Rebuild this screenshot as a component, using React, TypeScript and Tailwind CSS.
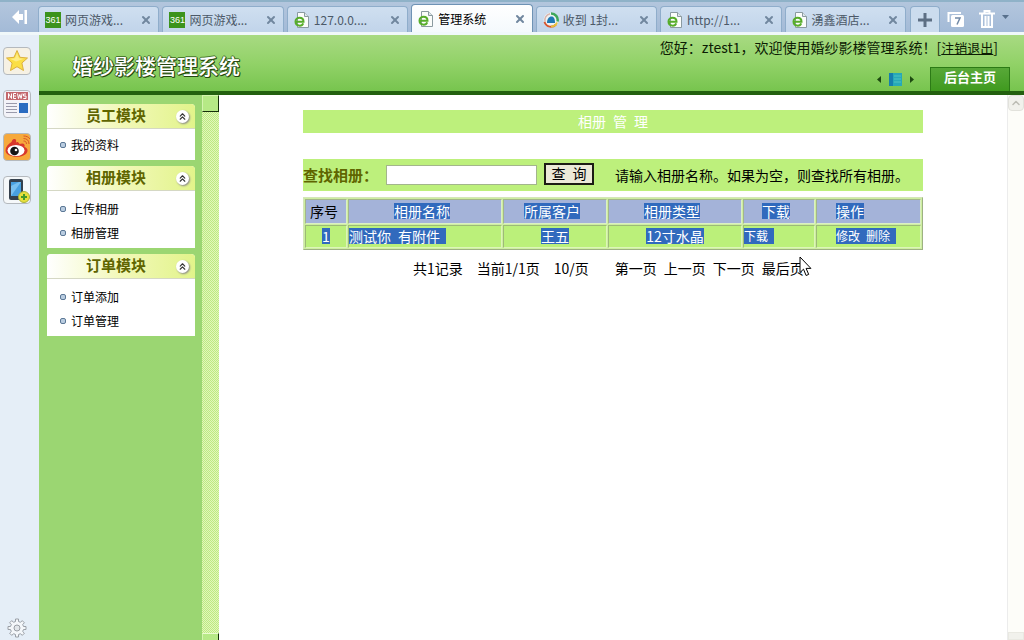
import React, { useState } from 'react';
import { ChevronUp, ChevronsUp, X } from 'lucide-react';

type TabIcon = '361' | 'page' | 'ball';

interface BrowserTab {
  title: string;
  icon: TabIcon;
}

const TABS: BrowserTab[] = [
  { title: '网页游戏...', icon: '361' },
  { title: '网页游戏...', icon: '361' },
  { title: '127.0.0....', icon: 'page' },
  { title: '管理系统', icon: 'page' },
  { title: '收到 1封...', icon: 'ball' },
  { title: 'http://1...', icon: 'page' },
  { title: '湧鑫酒店...', icon: 'page' },
];

const MENU = [
  { title: '员工模块', items: ['我的资料'], pad: 'pt-1' },
  { title: '相册模块', items: ['上传相册', '相册管理'], pad: 'pt-1.5' },
  { title: '订单模块', items: ['订单添加', '订单管理'], pad: 'pt-1.5' },
];

const PAGER_LINKS = ['第一页', '上一页', '下一页', '最后页'];

const PageIcon: React.FC = () => (
  <svg width="16" height="16" viewBox="0 0 16 16" className="shrink-0">
    <path d="M3.5 .5h7l4 4v11h-11z" fill="#fbfdfb" stroke="#8a9aa0" />
    <path d="M10.5 .5v4h4" fill="#dfe7ea" stroke="#8a9aa0" />
    <path d="M2 9.800h7.500C9.500 4.300 1.500 4.500 1.500 9.600c0 5 6.500 5 7.700 1.800" fill="none" stroke="#57ad2a" strokeWidth="2" />
  </svg>
);

const BallIcon: React.FC = () => (
  <svg width="16" height="16" viewBox="0 0 16 16" className="shrink-0">
    <circle cx="8" cy="8" r="7.500" fill="#eef2f4" />
    <path d="M2 10A6.500 6.500 0 0 1 7 1.800" fill="none" stroke="#d9b4ac" strokeWidth="1.500" />
    <path d="M8 1.500a6.500 6.500 0 0 1 6.500 8" fill="none" stroke="#3fa75a" strokeWidth="2.500" />
    <path d="M1.500 10c2 5.500 8 6 11.500 2.500" fill="none" stroke="#d8552e" strokeWidth="2" />
    <path d="M8 14.500c3 0 5-1.500 6-4" fill="none" stroke="#e8c43a" strokeWidth="2" />
    <path d="M4 11c0-4 2-6.500 4.500-6.500S12 7 12 11z" fill="#1e78b4" />
  </svg>
);

const Logo361: React.FC = () => (
  <span className="flex h-4 w-4 shrink-0 items-center justify-center bg-[#3c931c] font-['Liberation_Sans',sans-serif] text-[9px] text-white">361</span>
);

const StarIcon: React.FC = () => (
  <svg width="24" height="24" viewBox="0 0 24 24">
    <path d="M12 1.500l3 6.800 7.500.7-5.600 5 1.600 7.500L12 17.700 5.500 21.500l1.600-7.500-5.600-5 7.500-.7z" fill="#fbdf45" stroke="#dcb040" strokeLinejoin="round" />
    <path d="M12 4l2 5.200 5 .6-8 2.700-6-2.700 5-.6z" fill="#fdec86" />
  </svg>
);

const NewsIcon: React.FC = () => (
  <svg width="26" height="26" viewBox="0 0 26 26">
    <rect x="2" y="1" width="22" height="8" fill="#c4686c" />
    <path d="M4.500 7.500v-5l3 5v-5M12 2.500H9.500v5H12M9.500 5H12M13.500 2.500l1 5 1.300-4 1.300 4 1-5M22 3h-2.500v2H22v2.500h-2.700" fill="none" stroke="#fff" />
    <path d="M2 12.500h11M2 15.500h11M2 18.500h11M2 21.500h11" stroke="#9a9aab" />
    <rect x="15" y="12" width="9" height="10" fill="#2b6bc0" />
  </svg>
);

const WeiboIcon: React.FC = () => (
  <svg width="26" height="26" viewBox="0 0 26 26">
    <path d="M11 5C9 4.500 8 6 7.500 8 4 10 1.500 13 1.500 16.500c0 8 21 8.500 22 .5.300-2-1-3.500-3-4 .8-3-1-4.500-5-3C14 7.500 13 8 12 8.500 12.500 6.500 12 5.300 11 5z" fill="#d8382c" />
    <ellipse cx="12" cy="16.500" rx="8.500" ry="5.500" fill="#fff" />
    <circle cx="10.500" cy="17" r="4.300" fill="#151515" />
    <circle cx="12" cy="16" r="1.300" fill="#fff" />
    <path d="M19.500 7c2 0 3 1 3 3M19.500 4.500c3.500 0 5.500 2 5.500 5.500M19.500 2c3 0 5 1 6.500 3" fill="none" stroke="#d8562c" />
  </svg>
);

const PhoneIcon: React.FC = () => (
  <svg width="26" height="26" viewBox="0 0 26 26">
    <rect x="5" y="2" width="14" height="21" rx="2" fill="#35414e" />
    <rect x="7" y="5" width="10" height="14" fill="#48a0e0" />
    <path d="M7 19V9l8-4h2z" fill="#79c0f0" />
    <circle cx="20" cy="20" r="5.500" fill="#e8e03c" stroke="#a8b03a" />
    <path d="M20 17v6M17 20h6" stroke="#469a2a" strokeWidth="2" />
  </svg>
);

const GearIcon: React.FC = () => (
  <svg width="20" height="20" viewBox="0 0 20 20" fill="#f4f7fa" stroke="#9a9fa6" strokeLinejoin="round">
    <path d="M8.500 1h3v2.500l2 .8 1.700-1.700 2.200 2.200-1.700 1.700.8 2H19v3h-2.500l-.8 2 1.700 1.700-2.200 2.200-1.700-1.700-2 .8V19h-3v-2.500l-2-.8-1.700 1.700-2.200-2.200 1.700-1.700-.8-2H1v-3h2.500l.8-2-1.700-1.700 2.200-2.200 1.700 1.700 2-.8z" />
    <circle cx="10" cy="10" r="3" fill="#e2e6ea" />
  </svg>
);

const MouseCursor: React.FC = () => (
  <svg width="13" height="21" viewBox="0 0 13 21" className="absolute -top-0.5 -right-2">
    <path d="M1 1v15.500l3.500-3.300 2.600 6.300 2.600-1.100-2.600-6h4.800z" fill="#fff" stroke="#000" />
  </svg>
);

const Tab: React.FC<{ tab: BrowserTab; active: boolean; onClick: () => void }> = ({ tab, active, onClick }) => (
  <div
    className={`flex min-w-0 flex-1 items-center rounded-t border border-b-0 px-1.5 ${
      active ? 'h-7 border-[#6f93b5] bg-gradient-to-b from-white to-[#f4f9fc]' : 'h-[26px] border-[#8fadcb] bg-gradient-to-b from-[#cfdff0] to-[#c1d4ea]'
    }`}
  >
    <button onClick={onClick} className={`flex min-w-0 flex-1 items-center gap-1 text-xs whitespace-nowrap ${active ? 'text-black' : 'text-[#4c5968]'}`}>
      {tab.icon === '361' && <Logo361 />}
      {tab.icon === 'page' && <PageIcon />}
      {tab.icon === 'ball' && <BallIcon />}
      {tab.title}
    </button>
    <button aria-label="close" className="text-[#71879f]">
      <X size={12} strokeWidth={4} />
    </button>
  </div>
);

const TabBar: React.FC = () => {
  const [active, setActive] = useState(3);
  return (
    <div className="flex h-8 shrink-0 border-t-2 border-[#8fb2c8] bg-gradient-to-b from-[#b3c6dd] to-[#a3bad7]">
      <button aria-label="collapse" className="flex w-[38px] shrink-0 items-center justify-center">
        <svg width="15" height="14" viewBox="0 0 15 14" fill="#fff">
          <path d="M0 7l7-7v4h4v6H7v4zM12.500 0H15v14h-2.500z" />
        </svg>
      </button>
      <div className="flex min-w-0 flex-1 items-end gap-[3px]">
        {TABS.map((tab, i) => (
          <Tab key={i} tab={tab} active={i === active} onClick={() => setActive(i)} />
        ))}
      </div>
      <div className="flex w-[118px] shrink-0 items-end pl-1">
        <button aria-label="new tab" className="flex h-[26px] w-[30px] items-center justify-center rounded-t border border-b-0 border-[#8fadcb] bg-[#cbdcee]">
          <svg width="14" height="14" viewBox="0 0 14 14">
            <path d="M7 0v14M0 7h14" stroke="#5d6f84" strokeWidth="3" />
          </svg>
        </button>
        <button aria-label="tabs" className="flex h-[26px] w-8 items-center justify-center">
          <svg width="18" height="17" viewBox="0 0 18 17">
            <path d="M1.500 11V2H14" fill="none" stroke="#fff" strokeWidth="2" />
            <rect x="4" y="4" width="13" height="12" rx="1.500" fill="#fff" />
            <path d="M8 7h5l-3 6.500" fill="none" stroke="#7189a6" strokeWidth="1.500" />
          </svg>
        </button>
        <button aria-label="trash" className="flex h-[26px] w-[30px] items-center justify-center">
          <svg width="16" height="18" viewBox="0 0 16 18" fill="none" stroke="#fff" strokeWidth="2">
            <path d="M0 3.500h16M5.500 3V1h5v2M3 4v13h10V4M6.500 6v10M9.500 6v10" />
          </svg>
        </button>
        <span className="flex h-[26px] flex-1 items-center pb-1">
          <svg width="7" height="4" viewBox="0 0 7 4">
            <path d="M0 0h7L3.500 4z" fill="#58708c" />
          </svg>
        </span>
      </div>
    </div>
  );
};

const Rail: React.FC = () => {
  const box = 'flex h-7 w-7 items-center justify-center rounded border border-[#b4b9be] overflow-hidden';
  return (
    <aside className="flex w-[39px] shrink-0 flex-col items-center bg-[#e5eef7] pt-3 pr-[5px] pb-0.5">
      <div className="flex flex-col gap-[15px]">
        <button aria-label="favorites" className={`${box} bg-[#f6f1e4]`}><StarIcon /></button>
        <button aria-label="news" className={`${box} bg-[#f3f3f8]`}><NewsIcon /></button>
        <button aria-label="weibo" className={`${box} bg-[#f6a93c]`}><WeiboIcon /></button>
        <button aria-label="phone" className={`${box} bg-[#f5f8fa]`}><PhoneIcon /></button>
      </div>
      <button aria-label="settings" className="mt-auto"><GearIcon /></button>
    </aside>
  );
};

const Header: React.FC = () => (
  <header className="flex h-[60px] shrink-0 justify-between border-b-4 border-[#23600f] bg-gradient-to-b from-[#a8da82] via-[#92d268] to-[#77c44e]">
    <h1 className="pt-4 pl-[33px] text-[21px] leading-7 font-medium text-white [text-shadow:1px_1px_0_#24470f,-1px_0_0_#4a7a2c,0_-1px_0_#4a7a2c,1px_0_0_#24470f,0_1px_0_#24470f]">
      婚纱影楼管理系统
    </h1>
    <div className="flex flex-col items-end justify-between">
      <p className="pr-[26px] text-sm leading-6 text-[#0c1c04]">
        您好：ztest1，欢迎使用婚纱影楼管理系统！[<a href="#" className="text-[13px] underline">注销退出</a>]
      </p>
      <div className="flex items-end gap-4 pr-[14px]">
        <div className="flex h-6 items-center gap-[7px]">
          <svg width="5" height="7" viewBox="0 0 5 7"><path d="M4 0v7L0 3.500z" fill="#1d4a10" /></svg>
          <svg width="13" height="13" viewBox="0 0 13 13">
            <rect width="13" height="13" fill="#26a9b8" />
            <rect width="4" height="13" fill="#157fae" />
            <path d="M5 3h7M5 6h7M5 9h7" stroke="#4fc3c0" />
          </svg>
          <svg width="5" height="7" viewBox="0 0 5 7"><path d="M1 0v7l4-3.500z" fill="#1d4a10" /></svg>
        </div>
        <button className="h-6 w-20 border border-b-0 border-[#2c7a16] bg-gradient-to-b from-[#58a838] to-[#3f9a1e] pb-1.5 text-[13px] leading-4 font-bold text-white">
          后台主页
        </button>
      </div>
    </div>
  </header>
);

const SideMenu: React.FC = () => (
  <nav className="flex w-[163px] shrink-0 flex-col gap-1.5 bg-[#9bd672] pt-[9px] pr-[7px] pl-2">
    {MENU.map((group) => (
      <section key={group.title} className="rounded-t bg-white">
        <div className="flex h-[25px] rounded-t border-b border-[#d5d8c4] bg-gradient-to-r from-white via-[#f2f8b8] to-[#e2f48a] pr-1.5">
          <h2 className="flex-1 pl-[39px] text-[15px] leading-[22px] font-bold text-[#5f6500]">{group.title}</h2>
          <button aria-label={group.title} className="flex h-[13px] w-[13px] items-center justify-center self-center rounded-full bg-white text-[#333] shadow-[1px_1px_2px_#888]">
            <ChevronsUp size={11} strokeWidth={2.500} />
          </button>
        </div>
        <ul className={`pb-[3px] ${group.pad}`}>
          {group.items.map((item) => (
            <li key={item} className="flex h-6 items-center gap-[5px] pl-[13px] text-xs">
              <span className="h-1.5 w-1.5 rounded-[2px] border border-[#5c7896] bg-[#b9cce0]"></span>
              <a href="#" className="text-black">{item}</a>
            </li>
          ))}
        </ul>
      </section>
    ))}
  </nav>
);

const Splitter: React.FC = () => (
  <div className="flex w-[17px] shrink-0 flex-col justify-between bg-[#d6f3a4] bg-[repeating-conic-gradient(#bdec80_0_25%,#e2f5bd_0_50%)] bg-[length:2px_2px]">
    <div className="h-[17px] border border-t-[#d4f5ae] border-r-[#16300a] border-b-[#16300a] border-l-[#d4f5ae] bg-[#b6e986]"></div>
    <div className="h-[7px] border border-b-0 border-t-[#eafbd0] border-r-[#16300a] border-l-[#d4f5ae] bg-[#b6e986]"></div>
  </div>
);

// text inside an active selection
const Sel: React.FC<{ children: React.ReactNode; className?: string }> = ({ children, className = '' }) => (
  <span className={`inline-block h-4 bg-[#316abd] align-top leading-4 whitespace-pre text-white ${className}`}>{children}</span>
);

const AlbumTable: React.FC = () => {
  const th = 'h-[25px] border border-t-[#a3b58c] border-l-[#a3b58c] border-r-[#dcefc4] border-b-[#dcefc4] bg-[#a4b3d9] pt-0 pb-0.5 font-normal leading-4';
  const td = 'h-[23px] border border-t-[#9dba78] border-l-[#9dba78] border-r-[#dcf5b8] border-b-[#dcf5b8] bg-[#bbf07a] pt-0 pb-0.5 leading-4';
  return (
    <table className="mt-1.5 w-full table-fixed border-separate border-spacing-px border border-t-[#d3e6b8] border-r-[#9db183] border-b-[#9db183] border-l-[#d3e6b8] bg-[#cdeea0] text-sm">
      <colgroup>
        <col className="w-[42px]" />
        <col className="w-[154px]" />
        <col className="w-[104px]" />
        <col className="w-[134px]" />
        <col className="w-[72px]" />
        <col />
      </colgroup>
      <thead>
        <tr>
          <th className={`${th} pr-1 pl-0`}>序号</th>
          <th className={`${th} pr-1.5 pl-0`}><Sel>相册名称</Sel></th>
          <th className={`${th} pr-1.5 pl-0`}><Sel>所属客户</Sel></th>
          <th className={`${th} pr-1.5 pl-0`}><Sel>相册类型</Sel></th>
          <th className={`${th} pr-1.5 pl-0`}><Sel>下载</Sel></th>
          <th className={`${th} pr-0 pl-[19px] text-left`}><Sel>操作</Sel></th>
        </tr>
      </thead>
      <tbody>
        <tr className="text-center">
          <td className={`${td} px-0`}><Sel>1</Sel></td>
          <td className={`${td} px-0 text-left`}><Sel className="pr-1.5">测试你&ensp;有附件</Sel></td>
          <td className={`${td} px-0`}><Sel>王五</Sel></td>
          <td className={`${td} px-0`}><Sel>12寸水晶</Sel></td>
          <td className={`${td} px-0 text-left text-xs`}><Sel className="pr-1.5">下载</Sel></td>
          <td className={`${td} pr-0 pl-[19px] text-left text-xs`}><Sel className="pr-1.5">修改&ensp;删除</Sel></td>
        </tr>
      </tbody>
    </table>
  );
};

const Pager: React.FC = () => (
  <div className="mt-2 flex gap-[14px] pl-[110px] text-sm leading-5">
    <span>共1记录</span>
    <span>当前1/1页</span>
    <span>10/页</span>
    <div className="relative flex gap-[7px] pl-3">
      {PAGER_LINKS.map((label) => (
        <a key={label} href="#">{label}</a>
      ))}
      <MouseCursor />
    </div>
  </div>
);

const AlbumPage: React.FC = () => {
  const [keyword, setKeyword] = useState('');
  return (
    <main className="min-w-0 flex-1 pt-[15px]">
      <div className="mx-auto w-[620px] max-w-full">
        <h2 className="h-[23px] bg-[#bdf07c] text-center text-sm leading-[22px] text-white">相册&ensp;管&ensp;理</h2>
        <form className="mt-[26px] flex h-8 items-center bg-[#bdf07c] text-sm" onSubmit={(e) => e.preventDefault()}>
          <label htmlFor="keyword" className="w-[83px] text-[15px] font-bold whitespace-nowrap text-[#5f6500]">查找相册：</label>
          <input
            id="keyword"
            value={keyword}
            onChange={(e) => setKeyword(e.target.value)}
            className="h-5 w-[151px] border border-[#a3b58c] bg-white px-1"
          />
          <button type="submit" className="mr-[21px] mb-0.5 ml-[7px] h-[22px] w-[50px] border-2 border-[#1c1c14] bg-[#ece9d8] pb-1 leading-4">
            查&ensp;询
          </button>
          <span className="whitespace-nowrap">请输入相册名称。如果为空，则查找所有相册。</span>
        </form>
        <AlbumTable />
        <Pager />
      </div>
    </main>
  );
};

const ScrollTrack: React.FC = () => (
  <div className="flex w-[17px] shrink-0 flex-col justify-between border-l border-[#ececec] bg-[#fdfdf9]">
    <div className="flex h-4 items-center justify-center rounded-sm border border-[#e2e2dc] bg-[#f1f1ec] text-[#bcbcb4]">
      <ChevronUp size={12} strokeWidth={3} />
    </div>
    <div className="h-2 border border-[#e9e9e2] bg-[#f1f1ec]"></div>
  </div>
);

export default function App() {
  return (
    <div className="flex h-screen flex-col overflow-hidden bg-white font-['Noto_Sans_CJK_SC',sans-serif] text-black">
      <TabBar />
      <div className="h-[3px] shrink-0 bg-[#f0f8fa]"></div>
      <div className="flex min-h-0 flex-1">
        <Rail />
        <div className="flex min-w-0 flex-1 flex-col">
          <Header />
          <div className="flex min-h-0 flex-1">
            <SideMenu />
            <Splitter />
            <AlbumPage />
            <ScrollTrack />
          </div>
        </div>
      </div>
    </div>
  );
}
